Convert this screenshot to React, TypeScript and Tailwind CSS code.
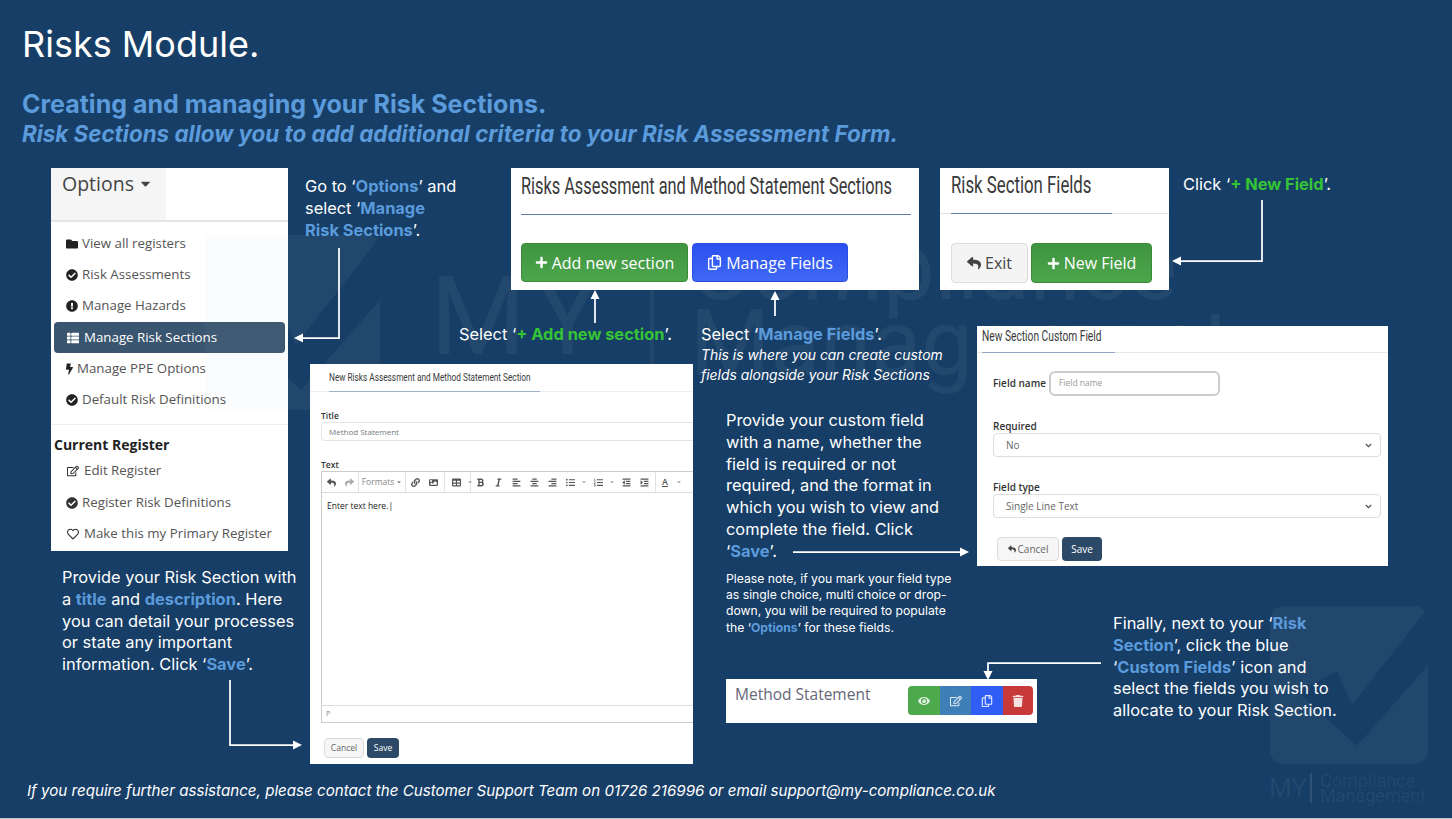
import type { ReactNode } from 'react'
import {
  FaFolder, FaCheckCircle, FaExclamationCircle, FaThList, FaBolt, FaRegEdit, FaRegHeart, FaPlus, FaReply, FaShare,
  FaRegCopy, FaEye, FaTrash, FaLink, FaImage, FaTable, FaBold, FaItalic, FaAlignLeft, FaAlignCenter, FaAlignRight,
  FaListUl, FaListOl, FaOutdent, FaIndent, FaCaretDown, FaChevronDown,
} from 'react-icons/fa'

const OPTIONS = [
  { icon: <FaFolder />, w: 'w-[12px]', label: 'View all registers' },
  { icon: <FaCheckCircle />, w: 'w-[12px]', label: 'Risk Assessments' },
  { icon: <FaExclamationCircle />, w: 'w-[12px]', label: 'Manage Hazards' },
  { icon: <FaThList />, w: 'w-[14px]', label: 'Manage Risk Sections', active: true },
  { icon: <FaBolt />, w: 'w-[7px]', label: 'Manage PPE Options' },
  { icon: <FaCheckCircle />, w: 'w-[12px]', label: 'Default Risk Definitions' },
]

const REGISTER = [
  { icon: <FaRegEdit />, w: 'w-[14px]', label: 'Edit Register' },
  { icon: <FaCheckCircle />, w: 'w-[12px]', label: 'Register Risk Definitions' },
  { icon: <FaRegHeart />, w: 'w-[14px]', label: 'Make this my Primary Register' },
]

function Blue({ children }: { children: ReactNode }) {
  return <span className="font-bold text-[#5b9bdc]">{children}</span>
}

function Green({ children }: { children: ReactNode }) {
  return <span className="font-bold text-[#35c435]">{children}</span>
}

function Callout({ className, size = 'text-[16.4px] leading-[21.8px]', children }: { className: string; size?: string; children: ReactNode }) {
  return <div className={`absolute whitespace-nowrap text-white ${size} ${className}`}>{children}</div>
}

function Panel({ className, children }: { className: string; children: ReactNode }) {
  return <div className={`absolute bg-white overflow-hidden font-['Open_Sans',sans-serif] ${className}`}>{children}</div>
}

// the app's headings are a condensed face, which is not installed
function Heading({ className, children }: { className: string; children: ReactNode }) {
  return <div className={`font-['Roboto',sans-serif] text-[#3a3a3a] whitespace-nowrap w-max origin-left ${className}`}>{children}</div>
}

function GreenButton({ label, className }: { label: string; className: string }) {
  return (
    <button className={`flex items-center justify-center gap-1 rounded border border-[#3a8a3a] bg-linear-to-b from-[#3f943f] to-[#4ca64c] text-white text-[16px] ${className}`}>
      <FaPlus className="text-[13px]" />
      {label}
    </button>
  )
}

function FakeSelect({ value }: { value: string }) {
  return (
    <div className="h-6 rounded border border-[#ddd] flex items-center justify-between pl-3 pr-2 text-[10px] text-[#666]">
      {value}
      <FaChevronDown className="text-[7px] text-[#333]" />
    </div>
  )
}

function Tool({ children, className = '' }: { children: ReactNode; className?: string }) {
  return <span className={`w-[18px] shrink-0 flex items-center justify-center ${className}`}>{children}</span>
}

function Caret() {
  return <span className="w-[10px] shrink-0 flex justify-center text-[6px] text-[#aaa]"><FaCaretDown /></span>
}

function Toolbar() {
  const group = 'flex items-center h-full border-r border-[#e2e2e2] shrink-0'
  return (
    <div className="h-[21px] flex items-center text-[9px] text-[#555] border-b border-[#ddd] bg-white">
      <div className={group}><Tool><FaReply /></Tool><Tool className="text-[#aaa]"><FaShare /></Tool></div>
      <div className={`${group} w-[47px] justify-center gap-[2px] text-[#888]`}><span className="text-[8.5px]">Formats</span><FaCaretDown className="text-[6px]" /></div>
      <div className={`${group} pr-[2px]`}><Tool><FaLink /></Tool><Tool><FaImage /></Tool></div>
      <div className={`${group} w-[26px] pl-[2px]`}><Tool className="w-[14px]"><FaTable /></Tool><Caret /></div>
      <div className={`${group} pr-[2px]`}>
        <Tool><FaBold /></Tool><Tool><FaItalic /></Tool><Tool><FaAlignLeft /></Tool><Tool><FaAlignCenter /></Tool><Tool><FaAlignRight /></Tool>
        <Tool><FaListUl /></Tool><Caret />
        <Tool><FaListOl /></Tool><Caret />
        <Tool><FaOutdent /></Tool><Tool><FaIndent /></Tool>
      </div>
      <div className="flex items-center h-full"><Tool className="underline font-semibold">A</Tool><Caret /></div>
    </div>
  )
}

export default function App() {
  return (
    <div className="relative w-[1452px] h-[819px] overflow-hidden bg-[#173e66] border-b border-[#bfc5cc] font-['Inter','Liberation_Sans',sans-serif]">
      {/* watermark */}
      <div className="absolute left-[430px] top-[262px] text-[110px] leading-[110px] tracking-[10px] text-white/5 font-['Roboto',sans-serif]">MY</div>
      <div className="absolute left-[690px] top-[230px] text-[92px] leading-[76px] text-white/5 font-['Roboto',sans-serif]">Compliance<br />Management</div>
      <div className="absolute left-[1269px] top-[773px] flex items-center gap-[8px] text-white/6 font-['Roboto',sans-serif]">
        <span className="text-[26px] leading-[30px] w-[33px]">MY</span>
        <span className="w-[2px] h-[30px] bg-white/10" />
        <span className="text-[18px] leading-[15px]">Compliance<br />Management</span>
      </div>
      <svg className="absolute inset-0" width="1452" height="819" viewBox="0 0 1452 819">
        <rect x="1270" y="606" width="158" height="158" rx="14" fill="#fff" fillOpacity="0.05" />
        <polygon points="1428,608 1352,705 1337,671 1298,692 1357,746 1428,665" fill="#173e66" />
        <rect x="205" y="235" width="175" height="175" rx="12" fill="#fff" fillOpacity="0.05" />
        <polygon points="380,237 296,345 279,307 236,330 301,390 380,300" fill="#173e66" />
        <rect x="650" y="240" width="4" height="140" fill="#fff" fillOpacity="0.05" />
      </svg>

      {/* title */}
      <h1 className="absolute left-[22px] top-[22px] text-[36px] leading-[44px] text-white">Risks Module.</h1>
      <div className="absolute left-[22px] top-[89px] leading-[30px] font-bold text-[#5b9bdc] whitespace-nowrap">
        <div className="text-[25px]">Creating and managing your Risk Sections.</div>
        <div className="text-[22.4px] italic">Risk Sections allow you to add additional criteria to your Risk Assessment Form.</div>
      </div>

      {/* options menu */}
      <Panel className="left-[51px] top-[168px] w-[237px] h-[383px] text-[13.3px] text-[#555]">
        <div className="h-[54px] border-b-2 border-[#e5e5e5]">
          <div className="w-[115px] h-[52px] bg-[#f5f5f5] pl-[11px] pt-[1px] text-[19.5px] text-[#444] flex items-start gap-1">
            Options <FaCaretDown className="text-[15px] mt-[7px]" />
          </div>
        </div>
        <div className="pt-[6px] px-[3px]">
          {OPTIONS.map(item => (
            <div
              key={item.label}
              className={`h-[31.3px] flex items-center gap-[4px] pl-[12px] rounded ${item.active ? 'bg-[#3a556f] text-white' : ''}`}
            >
              <span className={`text-[12px] flex justify-center ${item.w} ${item.active ? 'text-white' : 'text-[#222]'}`}>{item.icon}</span>
              {item.label}
            </div>
          ))}
        </div>
        <div className="mt-[8px] border-t border-[#eee] pt-[9px] pl-[3px] text-[14px] font-bold text-[#222]">Current Register</div>
        <div className="px-[3px] pt-[1px]">
          {REGISTER.map(item => (
            <div key={item.label} className="h-[31.3px] flex items-center gap-[4px] pl-[12px]">
              <span className={`text-[12px] flex justify-center text-[#333] ${item.w}`}>{item.icon}</span>
              {item.label}
            </div>
          ))}
        </div>
      </Panel>

      <Callout className="left-[305px] top-[176px]">
        Go to ‘<Blue>Options</Blue>’ and<br />select ‘<Blue>Manage</Blue><br /><Blue>Risk Sections</Blue>’.
      </Callout>

      {/* sections */}
      <Panel className="left-[511px] top-[168px] w-[408px] h-[122px] pl-[10px]">
        <Heading className="text-[23px] leading-[38px] scale-x-[0.71]">Risks Assessment and Method Statement Sections</Heading>
        <div className="mt-[8px] w-[390px] border-b border-[#5d7fa8]" />
        <div className="mt-[28px] flex gap-[4px]">
          <GreenButton label="Add new section" className="w-[167px] h-[39px]" />
          <button className="w-[156px] h-[39px] flex items-center justify-center gap-1 rounded border border-[#2a4fe0] bg-linear-to-b from-[#2b50f0] to-[#3f68f5] text-white text-[16px]">
            <FaRegCopy className="text-[15px]" />
            Manage Fields
          </button>
        </div>
      </Panel>

      {/* fields */}
      <Panel className="left-[940px] top-[168px] w-[229px] h-[122px] pl-[11px]">
        <Heading className="text-[23px] leading-[36px] scale-x-[0.73]">Risk Section Fields</Heading>
        <div className="mt-[9px] flex border-b border-[#e5e5e5] -ml-[11px] pl-[11px]">
          <div className="w-[161px] border-b border-[#5d7fa8] -mb-px" />
        </div>
        <div className="mt-[29px] flex gap-[3px]">
          <button className="w-[77px] h-[40px] flex items-center justify-center gap-1 rounded border border-[#ddd] bg-[#f4f4f4] text-[#444] text-[16px]">
            <FaReply className="text-[14px]" />Exit
          </button>
          <GreenButton label="New Field" className="w-[121px] h-[40px]" />
        </div>
      </Panel>

      <Callout className="left-[1183px] top-[174px]">
        Click ‘<Green>+ New Field</Green>’.
      </Callout>
      <Callout className="left-[459px] top-[324px]">
        Select ‘<Green>+ Add new section</Green>’.
      </Callout>
      <Callout className="left-[701px] top-[324px]">
        Select ‘<Blue>Manage Fields</Blue>’.
      </Callout>
      <Callout className="left-[701px] top-[345px] italic" size="text-[13.9px] leading-[20px]">
        This is where you can create custom<br />fields alongside your Risk Sections
      </Callout>

      {/* new section modal */}
      <Panel className="left-[310px] top-[364px] w-[383px] h-[400px] text-[8.5px]">
        <div className="pl-[19px] pt-[7px] border-b border-[#eee] h-[28px] relative">
          <Heading className="text-[11px] leading-[14px] scale-x-[0.75]">New Risks Assessment and Method Statement Section</Heading>
          <div className="absolute left-[19px] bottom-[-1px] w-[211px] border-b border-[#9fb2cc]" />
        </div>
        <div className="pl-[11px] pt-[18px]">
          <div className="font-semibold text-[#333] leading-[12px]">Title</div>
          <div className="h-[19px] rounded-l border border-r-0 border-[#e5e5e5] text-[#777] text-[8px] flex items-center pl-[7px]">Method Statement</div>
          <div className="mt-[18px] font-semibold text-[#333] leading-[12px]">Text</div>
          <div className="h-[252px] border border-r-0 border-[#ccc] flex flex-col">
            <Toolbar />
            <div className="flex-1 pl-[5px] pt-[7px] text-[8.5px] text-[#222]">Enter text here.|</div>
            <div className="h-[17px] border-t border-[#ddd] pl-[4px] flex items-center text-[#888] text-[7px]">P</div>
          </div>
          <div className="mt-[15px] flex gap-[3px] pl-[3px]">
            <button className="w-[40px] h-[20px] rounded border border-[#ddd] bg-[#f6f6f6] text-[#666]">Cancel</button>
            <button className="w-[32px] h-[20px] rounded bg-[#2c4a68] text-white">Save</button>
          </div>
        </div>
      </Panel>

      <Callout className="left-[62px] top-[567px]">
        Provide your Risk Section with<br />a <Blue>title</Blue> and <Blue>description</Blue>. Here<br />you can detail your processes<br />or state any important<br />information. Click ‘<Blue>Save</Blue>’.
      </Callout>

      <Callout className="left-[726px] top-[410px]">
        Provide your custom field<br />with a name, whether the<br />field is required or not<br />required, and the format in<br />which you wish to view and<br />complete the field. Click<br />‘<Blue>Save</Blue>’.
      </Callout>
      <Callout className="left-[726px] top-[571px]" size="text-[12.2px] leading-[16.2px]">
        Please note, if you mark your field type<br />as single choice, multi choice or drop-<br />down, you will be required to populate<br />the ‘<Blue>Options</Blue>’ for these fields.
      </Callout>

      {/* custom field */}
      <Panel className="left-[977px] top-[326px] w-[411px] h-[240px] text-[10px]">
        <div className="h-[27px] border-b border-[#e8e8e8] pl-[5px] pt-[1px] relative">
          <Heading className="text-[14px] leading-[18px] scale-x-[0.73]">New Section Custom Field</Heading>
          <div className="absolute left-[5px] bottom-[-1px] w-[133px] border-b border-[#8fa8c8]" />
        </div>
        <div className="pl-[16px] pr-[7px]">
          <div className="mt-[18px] flex items-center gap-[3px]">
            <span className="font-semibold text-[#333]">Field name</span>
            <div className="w-[171px] h-[25px] rounded-md border-2 border-[#ccc] pl-[8px] flex items-center text-[8.5px] text-[#999]">Field name</div>
          </div>
          <div className="mt-[23px] font-semibold text-[#333] leading-[14px]">Required</div>
          <FakeSelect value="No" />
          <div className="mt-[23px] font-semibold text-[#333] leading-[14px]">Field type</div>
          <FakeSelect value="Single Line Text" />
          <div className="mt-[19px] flex gap-[3px] pl-[4px]">
            <button className="w-[62px] h-[24px] flex items-center justify-center gap-[2px] rounded border border-[#ddd] bg-[#f6f6f6] text-[#666]"><FaReply className="text-[8px] text-[#444]" />Cancel</button>
            <button className="w-[40px] h-[24px] rounded bg-[#2c4a68] text-white">Save</button>
          </div>
        </div>
      </Panel>

      {/* row actions */}
      <Panel className="left-[726px] top-[679px] w-[311px] h-[44px] pl-[9px] flex justify-between text-[15.5px] text-[#667]">
        <span className="leading-[31px]">Method Statement</span>
        <div className="mt-[7px] mr-[4px] h-[29px] flex rounded overflow-hidden text-white/85 text-[12px]">
          <span className="w-[32px] flex items-center justify-center bg-[#4caa4c]"><FaEye /></span>
          <span className="w-[31px] flex items-center justify-center bg-[#3f7fb8]"><FaRegEdit /></span>
          <span className="w-[32px] flex items-center justify-center bg-[#2f5df5]"><FaRegCopy /></span>
          <span className="w-[30px] flex items-center justify-center bg-[#c83a3a]"><FaTrash /></span>
        </div>
      </Panel>

      <Callout className="left-[1113px] top-[613px]">
        Finally, next to your ‘<Blue>Risk</Blue><br /><Blue>Section</Blue>’, click the blue<br />‘<Blue>Custom Fields</Blue>’ icon and<br />select the fields you wish to<br />allocate to your Risk Section.
      </Callout>

      <div className="absolute left-[27px] top-[781px] whitespace-nowrap text-white italic text-[15.15px] leading-[19px]">
        If you require further assistance, please contact the Customer Support Team on 01726 216996 or email support@my-compliance.co.uk
      </div>

      {/* arrows, and the watermark's faint trace over the menu */}
      <svg className="absolute inset-0 pointer-events-none" width="1452" height="819" viewBox="0 0 1452 819" fill="none" stroke="#fff" strokeWidth="1.75">
        <rect x="205" y="235" width="83" height="175" fill="#173e66" fillOpacity="0.015" stroke="none" />
        <rect x="205" y="322" width="79" height="31" fill="#fff" fillOpacity="0.04" stroke="none" />
        <polyline points="339,248 339,338 300,338" />
        <polygon points="294,338 303,333.5 303,342.5" fill="#fff" stroke="none" />
        <line x1="595" y1="323" x2="595" y2="296" />
        <polygon points="595,290 590.5,299 599.5,299" fill="#fff" stroke="none" />
        <line x1="775" y1="316" x2="775" y2="297" />
        <polygon points="775,291 770.5,300 779.5,300" fill="#fff" stroke="none" />
        <polyline points="1262,200 1262,261 1178,261" />
        <polygon points="1172,261 1181,256.5 1181,265.5" fill="#fff" stroke="none" />
        <line x1="793" y1="552" x2="963" y2="552" />
        <polygon points="969,552 960,547.5 960,556.5" fill="#fff" stroke="none" />
        <polyline points="230,680 230,745 296,745" />
        <polygon points="302,745 293,740.5 293,749.5" fill="#fff" stroke="none" />
        <polyline points="1101,663 988,663 988,674" />
        <polygon points="988,680 983.5,671 992.5,671" fill="#fff" stroke="none" />
      </svg>
    </div>
  )
}
